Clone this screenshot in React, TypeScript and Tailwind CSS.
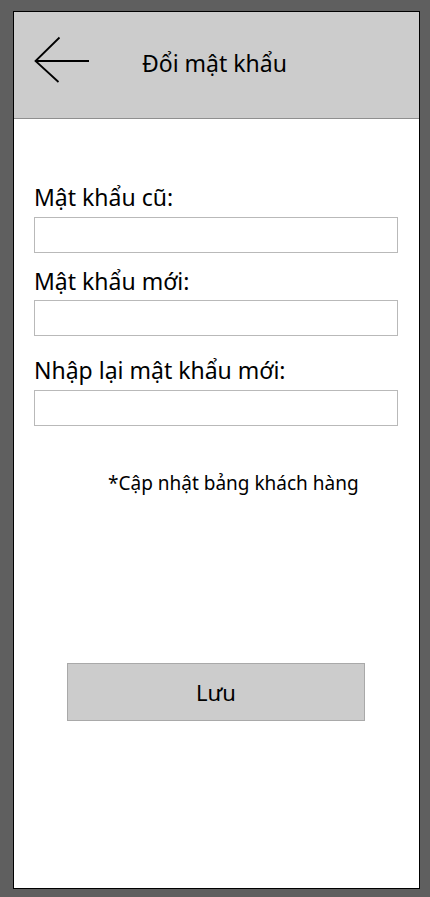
import React from "react";

function BackArrow() {
    return (
        <svg width="60" height="50" viewBox="0 0 60 50" className="block">
            <path d="M25.5 1.5 L1.5 25 L24.5 46" fill="none" stroke="#000" strokeWidth="1.8" />
            <path d="M1.5 25 L55 25" fill="none" stroke="#000" strokeWidth="1.8" />
        </svg>
    );
}

function Field({ label, top, gap }: { label: string; top: string; gap: string }) {
    return (
        <div className={top}>
            <div className={`text-[23px] leading-[26px] text-black ${gap}`}>{label}</div>
            <input
                type="password"
                className="block w-[364px] h-[36px] border border-[#b9b9b9] bg-white outline-none px-2"
            />
        </div>
    );
}

export default function App() {
    return (
        <div className="min-h-[897px] bg-[#5f5f5f] pt-[11px] pl-[13px]" style={{ fontFamily: '"Noto Sans", "Open Sans", sans-serif' }}>
            <div className="w-[407px] h-[878px] border border-black bg-white flex flex-col">
                <div className="h-[107px] bg-[#cccccc] border-b border-[#8f8f8f] flex items-start">
                    <div className="ml-[20px] mt-[24px]">
                        <BackArrow />
                    </div>
                    <div className="ml-[48px] mt-[36px] text-[23px] leading-[30px] text-black">Đổi mật khẩu</div>
                </div>

                <div className="pl-[20px] flex flex-col">
                    <Field label="Mật khẩu cũ:" top="mt-[65px]" gap="mb-[7px]" />
                    <Field label="Mật khẩu mới:" top="mt-[15px]" gap="mb-[6px]" />
                    <Field label="Nhập lại mật khẩu mới:" top="mt-[21px]" gap="mb-[7px]" />
                </div>

                <div className="mt-[45px] pl-[94px] text-[19px] leading-[24px] text-black">*Cập nhật bảng khách hàng</div>

                <div className="mt-[168px] pl-[53px]">
                    <button
                        type="button"
                        className="w-[298px] h-[58px] bg-[#cccccc] border border-[#a9a9a9] text-[22px] text-black flex items-center justify-center"
                    >
                        Lưu
                    </button>
                </div>
            </div>
        </div>
    );
}
